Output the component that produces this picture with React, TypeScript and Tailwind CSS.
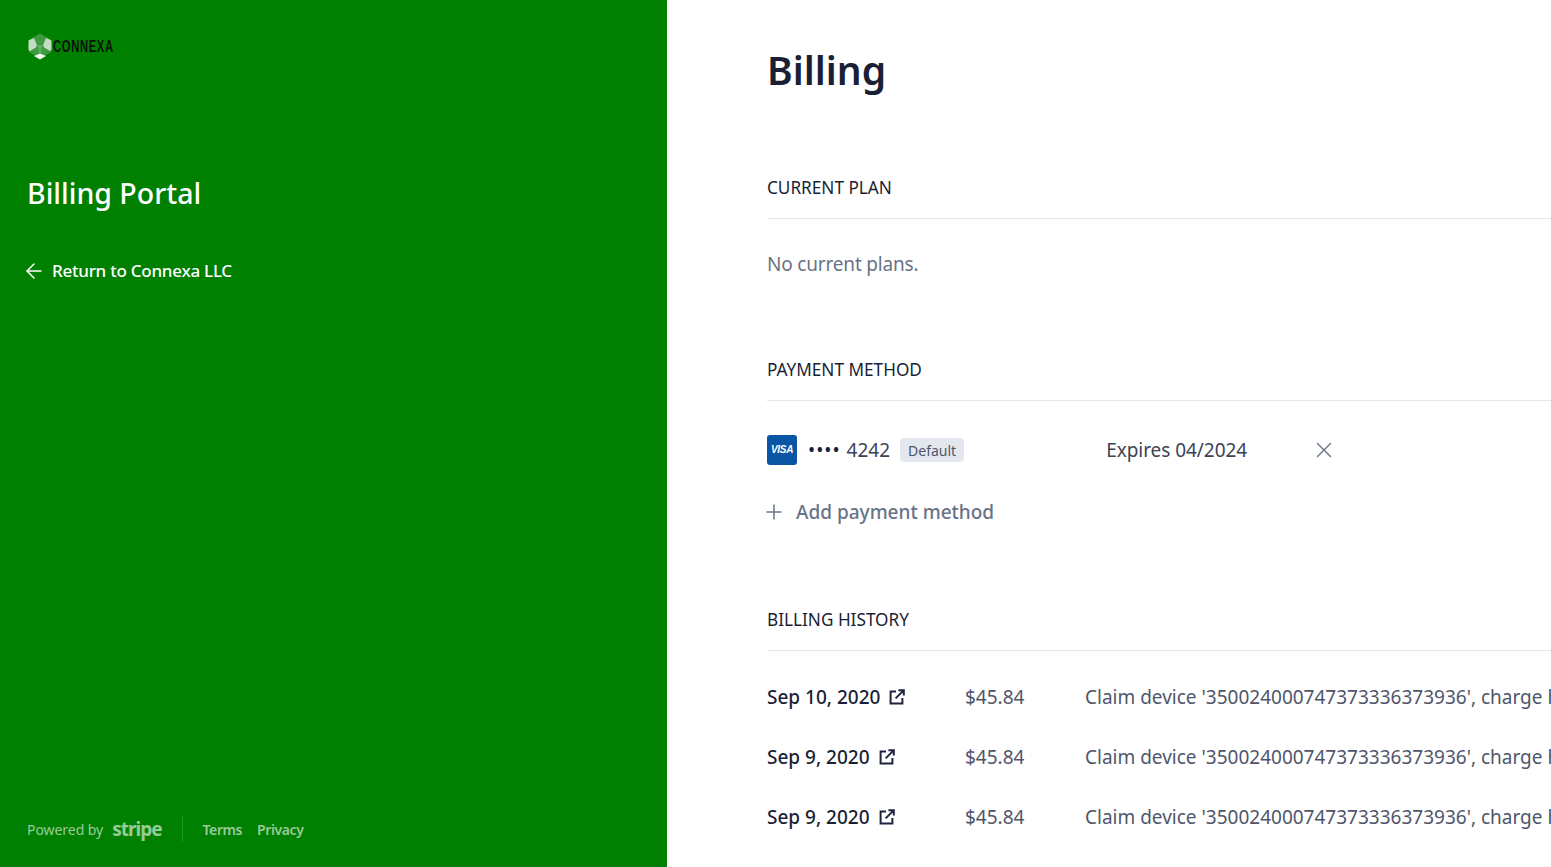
import React from 'react';
import { ArrowLeft, Plus, X } from 'lucide-react';

const font = { fontFamily: '"Noto Sans", "Open Sans", sans-serif' };

const invoices = [
  { date: 'Sep 10, 2020', amount: '$45.84' },
  { date: 'Sep 9, 2020', amount: '$45.84' },
  { date: 'Sep 9, 2020', amount: '$45.84' },
];

const LogoMark = () => (
  <svg width="26" height="27" viewBox="0 0 26 27" className="shrink-0">
    <polygon points="13,0.5 24,7 24,19 13,25.5 2,19 2,7" fill="#3d9c3d" />
    <polygon points="1.5,7.5 7,5 9.5,11 9.5,14 3,18 1.5,17" fill="#c4dcc4" />
    <polygon points="24.5,7.5 19,5 16.5,11 16.5,14 23,18 24.5,17" fill="#c4dcc4" />
    <polygon points="13,20.5 19,23 13,26.5 7,23" fill="#f2f7f2" />
    <path d="M13 14V20M13 14L9.5 11.5M13 14L16.5 11.5" stroke="#8cc48c" strokeWidth="1" fill="none" />
  </svg>
);

const VisaBadge = () => (
  <div className="flex h-[30px] w-[30px] items-center justify-center rounded-[3px] bg-[#0a55a4]">
    <span className="text-[10px] font-bold italic leading-none tracking-[-0.3px] text-white" style={{ fontFamily: '"Liberation Sans", sans-serif' }}>
      VISA
    </span>
  </div>
);

const ExternalIcon = () => (
  <svg width="16" height="16" viewBox="0 0 16 16" fill="none" stroke="#1f2340" strokeWidth="2" className="shrink-0">
    <path d="M7 2.6H1.6v11.8h11.8V9" />
    <path d="M6.6 9.4L14.4 1.6M9.4 1.2h5.4v5.4" />
  </svg>
);

const SectionHeading = ({ children }: { children: React.ReactNode }) => (
  <div className="border-b border-[#e3e6ec] pb-[18px]">
    <h2 className="text-[17.2px] leading-[24px] text-[#1a1f36]">{children}</h2>
  </div>
);

export default function App() {
  return (
    <div className="flex h-screen w-full overflow-hidden bg-white" style={font}>
      <aside className="flex w-[667px] shrink-0 flex-col bg-[#008000] pl-[27px] text-white">
        <div className="mt-[33px] flex h-[26px] items-center">
          <LogoMark />
          <span className="w-[61px] overflow-visible whitespace-nowrap">
            <span
              className="inline-block origin-left scale-x-[0.66] text-[17px] font-bold leading-none tracking-[1px] text-[#0a140a]"
              style={{ fontFamily: '"Liberation Sans", sans-serif' }}
            >
              CONNEXA
            </span>
          </span>
        </div>
        <h1 className="mt-[112px] text-[28.5px] font-medium leading-[44px]">Billing Portal</h1>
        <a className="mt-[44px] flex h-[24px] items-center text-[17px] font-medium tracking-[-0.25px]">
          <ArrowLeft size={24} strokeWidth={1.5} className="-mx-[5px] -my-2" />
          <span className="ml-[11px]">Return to Connexa LLC</span>
        </a>
        <div className="mt-auto mb-[25px] flex h-[26px] items-center text-[14px] text-white/60">
          <span className="tracking-[-0.05px]">Powered by</span>
          <span className="ml-[9px] text-[19px] font-bold leading-none tracking-[-1px]">stripe</span>
          <span className="ml-[20px] h-[26px] w-px bg-white/15" />
          <span className="ml-[20px] font-semibold tracking-[-0.4px]">Terms</span>
          <span className="ml-[15px] font-semibold tracking-[-0.4px]">Privacy</span>
        </div>
      </aside>

      <main className="min-w-0 flex-1 pl-[100px]">
        <h1 className="mt-[42px] text-[39px] font-semibold leading-[56px] text-[#1a1f36]">Billing</h1>

        <section className="mt-[78px]">
          <SectionHeading>CURRENT PLAN</SectionHeading>
          <p className="mt-[31px] text-[19px] leading-[28px] tracking-[-0.18px] text-[#697386]">No current plans.</p>
        </section>

        <section className="mt-[80px]">
          <SectionHeading>PAYMENT METHOD</SectionHeading>
          <div className="mt-[34px] flex h-[30px] items-center">
            <VisaBadge />
            <span className="ml-[11px] text-[19px] leading-none tracking-[1px] text-[#1a1f36]">••••</span>
            <span className="ml-[6px] text-[19px] text-[#3c4257]">4242</span>
            <span className="ml-[10px] flex h-[24px] items-center rounded-[4px] bg-[#e3e8ee] px-[8px] text-[14px] text-[#4f566b]">Default</span>
            <span className="ml-[142px] text-[19px] tracking-[-0.05px] text-[#3c4257]">Expires 04/2024</span>
            <X size={26} strokeWidth={1.3} className="ml-[64px] text-[#697386]" />
          </div>
          <div className="mt-[32px] flex h-[30px] items-center text-[19px] font-medium text-[#697386]">
            <Plus size={24} strokeWidth={1.5} className="-mx-[5px]" />
            <span className="ml-[15px]">Add payment method</span>
          </div>
        </section>

        <section className="mt-[81px]">
          <SectionHeading>BILLING HISTORY</SectionHeading>
          <div className="mt-[16px] flex flex-col">
            {invoices.map((inv, i) => (
              <div key={i} className="flex h-[60px] items-center whitespace-nowrap text-[19px]">
                <div className="flex w-[198px] shrink-0 items-center gap-[9px] font-medium text-[#1a1f36]">
                  {inv.date}
                  <ExternalIcon />
                </div>
                <div className="w-[120px] shrink-0 text-[#4f566b]">{inv.amount}</div>
                <div className="text-[#4f566b]">Claim device '350024000747373336373936', charge his</div>
              </div>
            ))}
          </div>
        </section>
      </main>
    </div>
  );
}
